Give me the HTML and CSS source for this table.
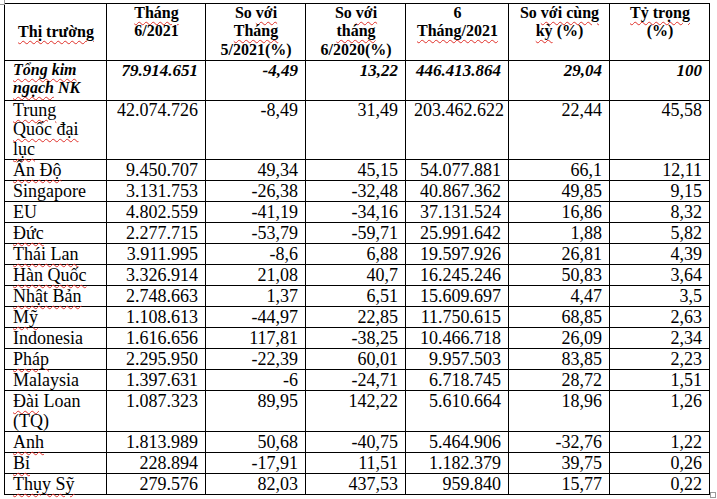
FILE: index.html
```html
<!DOCTYPE html>
<html lang="vi">
<head>
<meta charset="utf-8">
<title>Thị trường nhập khẩu</title>
<link rel="stylesheet" href="styles.css">
</head>
<body>
<div class="sheet">
<span class="handle handle-tl"></span>
<table class="trade">
<colgroup>
<col class="c1"><col class="c2"><col class="c3"><col class="c4"><col class="c5"><col class="c6"><col class="c7">
</colgroup>
<thead>
<tr class="head">
<th class="mid"><span class="sp">Thị trường</span></th>
<th><span class="sp">Tháng</span><br>6/2021</th>
<th>So <span class="sp">với</span><br><span class="sp">Tháng</span><br>5/2021(%)</th>
<th>So <span class="sp">với</span><br><span class="sp">tháng</span><br>6/2020(%)</th>
<th>6<br><span class="sp">Tháng/2021</span></th>
<th>So <span class="sp">với cùng</span><br><span class="sp">kỳ</span> (%)</th>
<th><span class="sp">Tỷ trọng</span><br>(%)</th>
</tr>
</thead>
<tbody>
<tr class="total">
<td class="name"><span class="sp">Tổng kim</span><br><span class="sp">ngạch</span> NK</td>
<td>79.914.651</td><td>-4,49</td><td>13,22</td><td>446.413.864</td><td>29,04</td><td>100</td>
</tr>
<tr class="tq">
<td class="name"><span class="sp">Trung</span><br><span class="sp">Quốc đại</span><br><span class="sp">lục</span></td>
<td>42.074.726</td><td>-8,49</td><td>31,49</td><td>203.462.622</td><td>22,44</td><td>45,58</td>
</tr>
<tr><td class="name"><span class="sp">Ấn Độ</span></td><td>9.450.707</td><td>49,34</td><td>45,15</td><td>54.077.881</td><td>66,1</td><td>12,11</td></tr>
<tr><td class="name">Singapore</td><td>3.131.753</td><td>-26,38</td><td>-32,48</td><td>40.867.362</td><td>49,85</td><td>9,15</td></tr>
<tr><td class="name">EU</td><td>4.802.559</td><td>-41,19</td><td>-34,16</td><td>37.131.524</td><td>16,86</td><td>8,32</td></tr>
<tr><td class="name"><span class="sp">Đức</span></td><td>2.277.715</td><td>-53,79</td><td>-59,71</td><td>25.991.642</td><td>1,88</td><td>5,82</td></tr>
<tr><td class="name"><span class="sp">Thái Lan</span></td><td>3.911.995</td><td>-8,6</td><td>6,88</td><td>19.597.926</td><td>26,81</td><td>4,39</td></tr>
<tr><td class="name"><span class="sp">Hàn Quốc</span></td><td>3.326.914</td><td>21,08</td><td>40,7</td><td>16.245.246</td><td>50,83</td><td>3,64</td></tr>
<tr><td class="name"><span class="sp">Nhật Bản</span></td><td>2.748.663</td><td>1,37</td><td>6,51</td><td>15.609.697</td><td>4,47</td><td>3,5</td></tr>
<tr><td class="name"><span class="sp">Mỹ</span></td><td>1.108.613</td><td>-44,97</td><td>22,85</td><td>11.750.615</td><td>68,85</td><td>2,63</td></tr>
<tr><td class="name">Indonesia</td><td>1.616.656</td><td>117,81</td><td>-38,25</td><td>10.466.718</td><td>26,09</td><td>2,34</td></tr>
<tr><td class="name"><span class="sp">Pháp</span></td><td>2.295.950</td><td>-22,39</td><td>60,01</td><td>9.957.503</td><td>83,85</td><td>2,23</td></tr>
<tr><td class="name">Malaysia</td><td>1.397.631</td><td>-6</td><td>-24,71</td><td>6.718.745</td><td>28,72</td><td>1,51</td></tr>
<tr><td class="name"><span class="sp">Đài</span> Loan<br>(TQ)</td><td>1.087.323</td><td>89,95</td><td>142,22</td><td>5.610.664</td><td>18,96</td><td>1,26</td></tr>
<tr><td class="name"><span class="sp">Anh</span></td><td>1.813.989</td><td>50,68</td><td>-40,75</td><td>5.464.906</td><td>-32,76</td><td>1,22</td></tr>
<tr><td class="name"><span class="sp">Bỉ</span></td><td>228.894</td><td>-17,91</td><td>11,51</td><td>1.182.379</td><td>39,75</td><td>0,26</td></tr>
<tr><td class="name"><span class="sp">Thụy Sỹ</span></td><td>279.576</td><td>82,03</td><td>437,53</td><td>959.840</td><td>15,77</td><td>0,22</td></tr>
</tbody>
</table>
<span class="handle handle-br"></span>
</div>
</body>
</html>
```

FILE: styles.css
```css
html, body {
  margin: 0;
  padding: 0;
  background: #fff;
}

.sheet {
  position: relative;
  padding: 3px 0 0 4px;
  width: 717px;
  height: 499px;
  box-sizing: border-box;
}

.trade {
  border-collapse: collapse;
  table-layout: fixed;
  width: 706px;
  font-family: "Liberation Serif", "Times New Roman", serif;
  color: #000;
}

.c1 { width: 102px; }
.c2 { width: 99px; }
.c3 { width: 100px; }
.c4 { width: 100px; }
.c5 { width: 103px; }
.c6 { width: 101px; }
.c7 { width: 100px; }

.trade th,
.trade td {
  border: 1px solid #000;
  padding: 0 7px 0 8px;
  vertical-align: top;
}

.trade th {
  font-size: 16px;
  font-weight: bold;
  line-height: 18.4px;
  text-align: center;
  height: 56px;
}

.trade th.mid {
  vertical-align: middle;
}

.trade td {
  font-size: 18px;
  line-height: 20px;
  text-align: right;
}

.trade td.name {
  text-align: left;
  white-space: nowrap;
}

.total td {
  font-size: 17px;
  font-weight: bold;
  font-style: italic;
  height: 39px;
  line-height: 19.5px;
}

.total td.name {
  font-size: 16px;
  line-height: 18px;
}

.tq td {
  line-height: 19.3px;
}

.sp {
  text-decoration: underline wavy #e0302a;
  text-decoration-thickness: 1px;
  text-underline-offset: 3px;
}

.handle {
  position: absolute;
  width: 4px;
  height: 4px;
  border: 1px solid #9a9a9a;
  background: #fff;
}

.handle-tl {
  left: -1px;
  top: -1px;
}

.handle-br {
  left: 710px;
  top: 492px;
}
```
